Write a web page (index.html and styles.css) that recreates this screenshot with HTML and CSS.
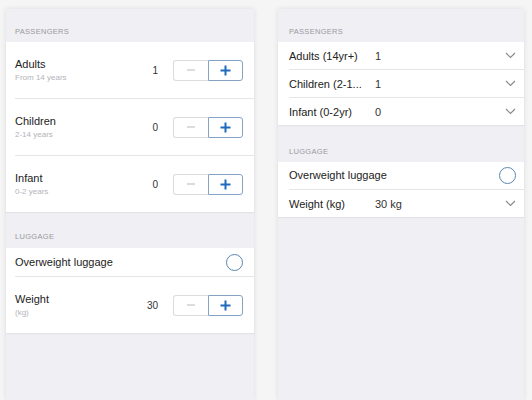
FILE: index.html
```html
<!DOCTYPE html>
<html lang="en">

<head>
    <meta charset="UTF-8">
    <meta name="viewport" content="width=device-width, initial-scale=1.0">
    <title>Passengers</title>
    <link rel="stylesheet" href="styles.css">
</head>

<body>
    <main class="screens">
        <!-- Stepper variant -->
        <section class="panel panel-left">
            <h2 class="group-title">Passengers</h2>
            <ul class="list">
                <li class="row row-tall">
                    <div class="label">
                        <span class="title">Adults</span>
                        <span class="sub">From 14 years</span>
                    </div>
                    <span class="value">1</span>
                    <div class="stepper">
                        <button class="step step-minus"><svg width="10" height="10" viewBox="0 0 10 10"><path d="M1 5h8" stroke="#c4c4c8" stroke-width="1.2"/></svg></button>
                        <button class="step step-plus"><svg width="11" height="11" viewBox="0 0 11 11"><path d="M5.5 0.5v10M0.5 5.5h10" stroke="#1f6bbd" stroke-width="2"/></svg></button>
                    </div>
                </li>
                <li class="row row-tall">
                    <div class="label">
                        <span class="title">Children</span>
                        <span class="sub">2-14 years</span>
                    </div>
                    <span class="value">0</span>
                    <div class="stepper">
                        <button class="step step-minus"><svg width="10" height="10" viewBox="0 0 10 10"><path d="M1 5h8" stroke="#c4c4c8" stroke-width="1.2"/></svg></button>
                        <button class="step step-plus"><svg width="11" height="11" viewBox="0 0 11 11"><path d="M5.5 0.5v10M0.5 5.5h10" stroke="#1f6bbd" stroke-width="2"/></svg></button>
                    </div>
                </li>
                <li class="row row-tall">
                    <div class="label">
                        <span class="title">Infant</span>
                        <span class="sub">0-2 years</span>
                    </div>
                    <span class="value">0</span>
                    <div class="stepper">
                        <button class="step step-minus"><svg width="10" height="10" viewBox="0 0 10 10"><path d="M1 5h8" stroke="#c4c4c8" stroke-width="1.2"/></svg></button>
                        <button class="step step-plus"><svg width="11" height="11" viewBox="0 0 11 11"><path d="M5.5 0.5v10M0.5 5.5h10" stroke="#1f6bbd" stroke-width="2"/></svg></button>
                    </div>
                </li>
            </ul>
            <h2 class="group-title group-gap">Luggage</h2>
            <ul class="list">
                <li class="row row-short">
                    <span class="title">Overweight luggage</span>
                    <span class="toggle"></span>
                </li>
                <li class="row row-tall">
                    <div class="label">
                        <span class="title">Weight</span>
                        <span class="sub">(kg)</span>
                    </div>
                    <span class="value">30</span>
                    <div class="stepper">
                        <button class="step step-minus"><svg width="10" height="10" viewBox="0 0 10 10"><path d="M1 5h8" stroke="#c4c4c8" stroke-width="1.2"/></svg></button>
                        <button class="step step-plus"><svg width="11" height="11" viewBox="0 0 11 11"><path d="M5.5 0.5v10M0.5 5.5h10" stroke="#1f6bbd" stroke-width="2"/></svg></button>
                    </div>
                </li>
            </ul>
        </section>

        <!-- Picker variant -->
        <section class="panel panel-right">
            <h2 class="group-title">Passengers</h2>
            <ul class="list">
                <li class="row row-short">
                    <span class="name">Adults (14yr+)</span>
                    <span class="pick">1</span>
                    <svg class="chevron" width="11" height="7" viewBox="0 0 11 7"><path d="M1 1l4.5 4.5L10 1" fill="none" stroke="#8a8a8f" stroke-width="1.2"/></svg>
                </li>
                <li class="row row-short">
                    <span class="name">Children (2-1...</span>
                    <span class="pick">1</span>
                    <svg class="chevron" width="11" height="7" viewBox="0 0 11 7"><path d="M1 1l4.5 4.5L10 1" fill="none" stroke="#8a8a8f" stroke-width="1.2"/></svg>
                </li>
                <li class="row row-short">
                    <span class="name">Infant (0-2yr)</span>
                    <span class="pick">0</span>
                    <svg class="chevron" width="11" height="7" viewBox="0 0 11 7"><path d="M1 1l4.5 4.5L10 1" fill="none" stroke="#8a8a8f" stroke-width="1.2"/></svg>
                </li>
            </ul>
            <h2 class="group-title group-gap">Luggage</h2>
            <ul class="list">
                <li class="row row-short">
                    <span class="title">Overweight luggage</span>
                    <span class="toggle"></span>
                </li>
                <li class="row row-short">
                    <span class="name">Weight (kg)</span>
                    <span class="pick">30 kg</span>
                    <svg class="chevron" width="11" height="7" viewBox="0 0 11 7"><path d="M1 1l4.5 4.5L10 1" fill="none" stroke="#8a8a8f" stroke-width="1.2"/></svg>
                </li>
            </ul>
        </section>
    </main>
</body>

</html>
```

FILE: styles.css
```css
body {
    margin: 0;
    background-color: #f5f5f6;
    font-family: "Liberation Sans", Arial, sans-serif;
    color: #222;
}

.screens {
    display: flex;
    gap: 24px;
    padding: 9px 0 0 6px;
    height: 391px;
    overflow: hidden;
}

.panel {
    background-color: #efeff4;
    box-shadow: 0 0 5px rgba(0, 0, 0, 0.1);
    height: 100%;
}

.panel-left {
    width: 248px;
}

.panel-right {
    width: 246px;
}

.group-title {
    margin: 0;
    padding: 18px 9px 5px;
    font-size: 7.5px;
    line-height: 10px;
    font-weight: normal;
    text-transform: uppercase;
    letter-spacing: 0.3px;
    color: #9a9aa0;
}

.panel-right .group-title {
    padding-left: 11px;
}

.group-gap {
    padding-top: 20px;
    padding-bottom: 6px;
}

.panel-right .group-gap {
    padding-top: 22px;
    padding-bottom: 5px;
}

.list {
    list-style: none;
    margin: 0;
    padding: 0 0 0 9px;
    background-color: #fff;
    box-shadow: 0 1px 1px rgba(0, 0, 0, 0.05);
}

.panel-right .list {
    padding-left: 11px;
}

.row {
    display: flex;
    align-items: center;
    padding-right: 11px;
    border-bottom: 1px solid #e6e6ea;
}

.row:last-child {
    border-bottom: none;
}

.row-tall {
    height: 56px;
}

.row-short {
    height: 28px;
}

.panel-right .row-short {
    height: 27px;
    padding-right: 8px;
}

.label {
    display: flex;
    flex-direction: column;
    flex: 1;
}

.title {
    font-size: 11px;
    line-height: 13px;
    flex: 1;
}

.sub {
    margin-top: 2px;
    font-size: 8px;
    line-height: 10px;
    color: #b4b4b8;
}

.value {
    font-size: 10px;
    margin-right: 15px;
    color: #333;
}

.stepper {
    display: flex;
    width: 70px;
    height: 21px;
}

.step {
    flex: 1;
    display: flex;
    align-items: center;
    justify-content: center;
    padding: 0;
    background-color: #fff;
    cursor: pointer;
}

.step-minus {
    border: 1px solid #dcdce0;
    border-right: none;
    border-radius: 3px 0 0 3px;
}

.step-plus {
    border: 1px solid #86a3c3;
    border-radius: 0 3px 3px 0;
}

.toggle {
    width: 15px;
    height: 15px;
    border: 1.5px solid #5a86b2;
    border-radius: 50%;
}

.name {
    width: 80px;
    margin-right: 6px;
    font-size: 11px;
    white-space: nowrap;
}

.pick {
    flex: 1;
    font-size: 11px;
    color: #333;
}

.chevron {
    display: block;
}
```
